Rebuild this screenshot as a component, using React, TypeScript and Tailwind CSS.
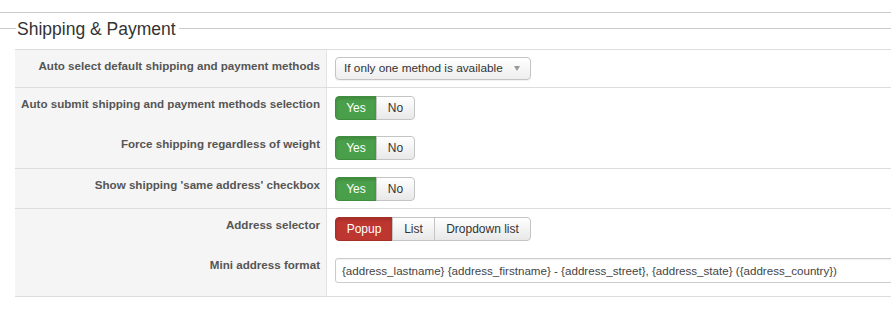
import React from "react";

type Opt = { label: string; active?: "green" | "red" };

const Toggle: React.FC<{ options: Opt[]; widths: string[] }> = ({ options, widths }) => (
  <div className="flex">
    {options.map((o, i) => {
      const first = i === 0;
      const last = i === options.length - 1;
      const base =
        "h-[24px] flex items-center justify-center text-[12px] border " +
        (first ? "rounded-l-[4px] " : "-ml-px ") +
        (last ? "rounded-r-[4px] " : "");
      const color =
        o.active === "green"
          ? "bg-[#4a9f4a] border-[#3f8d3f] text-white shadow-[inset_0_2px_3px_rgba(0,0,0,0.15)]"
          : o.active === "red"
          ? "bg-[#bd362f] border-[#a52f29] text-white shadow-[inset_0_2px_3px_rgba(0,0,0,0.15)]"
          : "bg-gradient-to-b from-white to-[#e8e8e8] border-[#c4c4c4] text-[#333]";
      return (
        <div key={o.label} className={base + color + " " + widths[i]}>
          {o.label}
        </div>
      );
    })}
  </div>
);

const Label: React.FC<{ text: string; h: string; border?: boolean; children: React.ReactNode }> = ({
  text,
  h,
  border,
  children,
}) => (
  <div className={"flex " + h + (border ? " border-b border-[#dddddd]" : "")}>
    <div className="w-[312px] shrink-0 bg-[#f5f5f5] border-r border-[#e3e3e3] pt-[8px] pr-[6px] text-right text-[11.6px] leading-[16px] font-bold text-[#555] whitespace-nowrap">
      {text}
    </div>
    <div className="flex-1 pl-[8px] pt-[8px] min-w-0">{children}</div>
  </div>
);

export default function App() {
  return (
    <div className="w-[891px] h-[325px] bg-white overflow-hidden" style={{ fontFamily: '"Liberation Sans", Arial, sans-serif' }}>
      <div className="pt-[12px]">
        <div className="border-t border-[#cccccc]" />
      </div>
      <div className="flex items-center h-[31px]">
        <div className="w-[16px] border-t border-[#cccccc]" />
        <div className="px-[1px] text-[17.5px] text-[#333] leading-[22px]">Shipping &amp; Payment</div>
        <div className="flex-1 border-t border-[#cccccc] ml-[2px]" />
      </div>
      <div className="ml-[15px] mt-[5px] border-t border-[#dddddd]">
        <Label text="Auto select default shipping and payment methods" h="h-[38px]" border>
          <div className="-mt-px w-[196px] h-[23px] flex items-center justify-between rounded-[4px] border border-[#c4c4c4] bg-gradient-to-b from-white to-[#eeeeee] pl-[8px] pr-[10px] text-[11.8px] text-[#333] shadow-[0_1px_1px_rgba(0,0,0,0.06)]">
            <span>If only one method is available</span>
            <span className="w-0 h-0 border-l-[3.5px] border-r-[3.5px] border-t-[5px] border-l-transparent border-r-transparent border-t-[#999]" />
          </div>
        </Label>
        <Label text="Auto submit shipping and payment methods selection" h="h-[40px]">
          <Toggle options={[{ label: "Yes", active: "green" }, { label: "No" }]} widths={["w-[42px]", "w-[39px]"]} />
        </Label>
        <Label text="Force shipping regardless of weight" h="h-[41px]" border>
          <Toggle options={[{ label: "Yes", active: "green" }, { label: "No" }]} widths={["w-[42px]", "w-[39px]"]} />
        </Label>
        <Label text="Show shipping 'same address' checkbox" h="h-[40px]" border>
          <Toggle options={[{ label: "Yes", active: "green" }, { label: "No" }]} widths={["w-[42px]", "w-[39px]"]} />
        </Label>
        <Label text="Address selector" h="h-[40px]">
          <Toggle
            options={[{ label: "Popup", active: "red" }, { label: "List" }, { label: "Dropdown list" }]}
            widths={["w-[58px]", "w-[43px]", "w-[97px]"]}
          />
        </Label>
        <Label text="Mini address format" h="h-[48px]" border>
          <div className="mt-[1px] w-[600px] h-[25px] flex items-center rounded-l-[3px] border border-[#cccccc] bg-white pl-[6px] text-[11.6px] text-[#444] whitespace-nowrap shadow-[inset_0_1px_1px_rgba(0,0,0,0.06)]">
            {"{address_lastname} {address_firstname} - {address_street}, {address_state} ({address_country})"}
          </div>
        </Label>
      </div>
    </div>
  );
}
